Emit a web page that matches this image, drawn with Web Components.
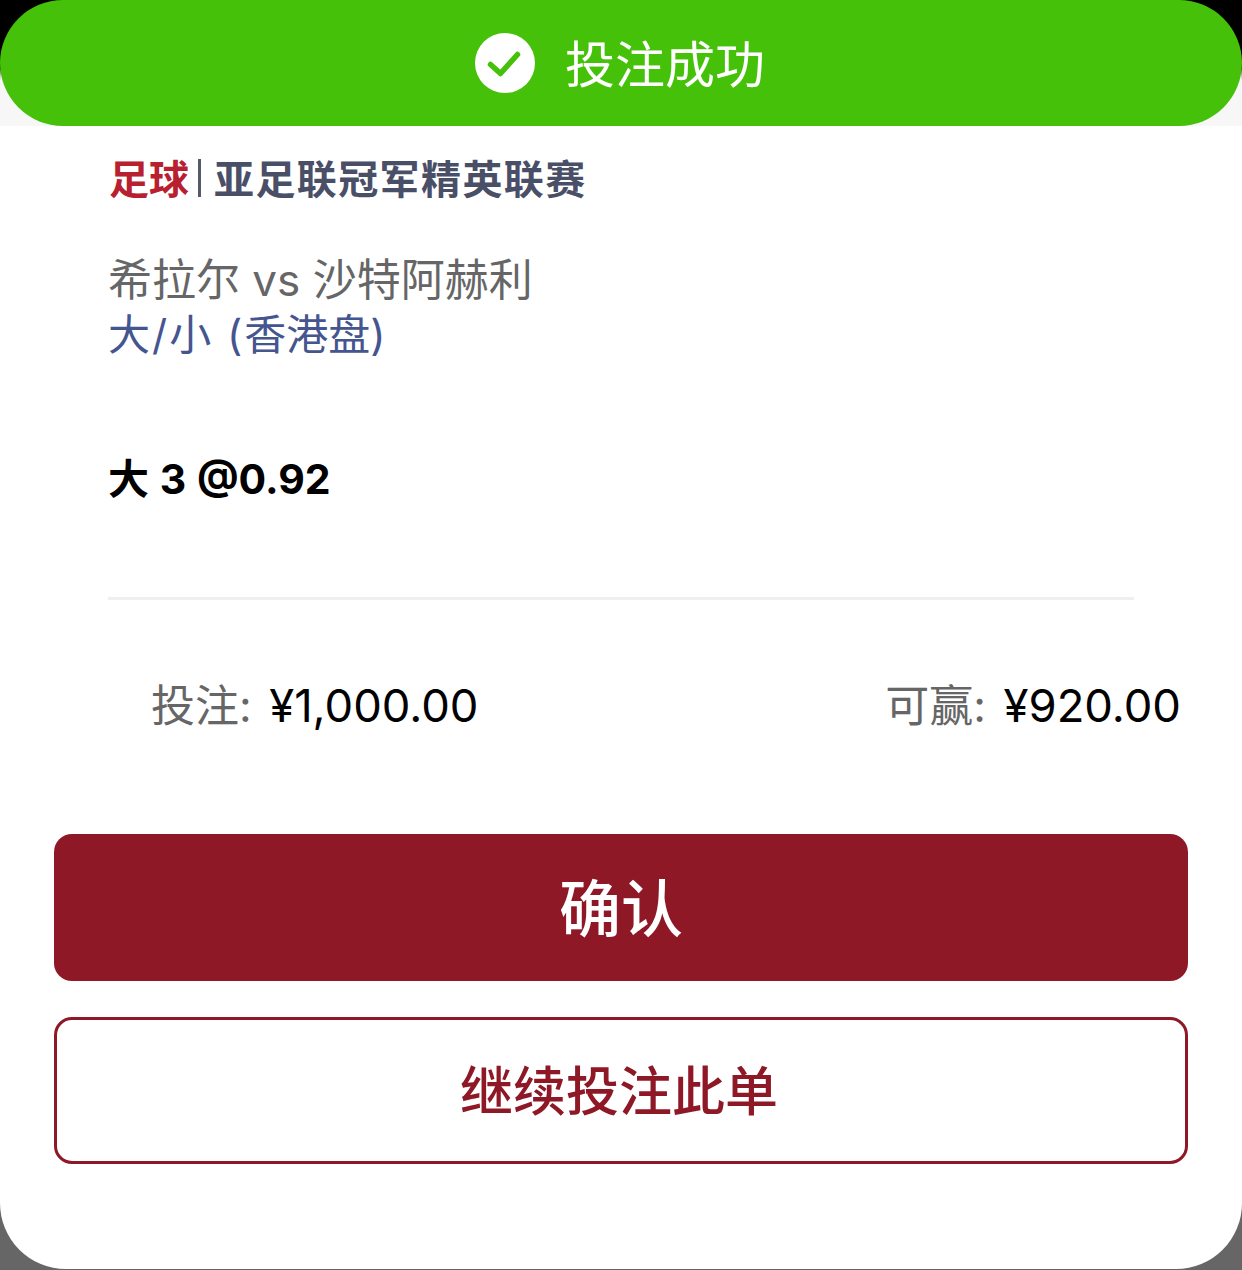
<!DOCTYPE html>
<html lang="zh">
<head>
<meta charset="utf-8">
<title>投注成功</title>
<style>
  html, body { margin: 0; height: 100%; }
  body {
    width: 1242px; height: 1270px; overflow: hidden;
    background: linear-gradient(#000 0, #000 80px, #666 1180px);
    font-family: Inter, "Noto Sans CJK SC", sans-serif;
  }
</style>
</head>
<body>
<bet-sheet>
  <success-banner>投注成功</success-banner>
  <bet-league sport="足球">亚足联冠军精英联赛</bet-league>
  <bet-match teams="希拉尔 vs 沙特阿赫利" market="大/小 (香港盘)"></bet-match>
  <bet-pick>大 3 @0.92</bet-pick>
  <bet-amounts stake="¥1,000.00" win="¥920.00"></bet-amounts>
  <action-button kind="solid">确认</action-button>
  <action-button kind="outline">继续投注此单</action-button>
</bet-sheet>

<script>
/* ── helper ── */
function shadow(el, html) {
  el.attachShadow({ mode: "open" }).innerHTML = html;
}
const STACK = `Inter, "Noto Sans CJK SC", sans-serif`;

/* ── <bet-sheet> ── */
class BetSheet extends HTMLElement {
  connectedCallback() {
    shadow(this, `
      <style>
        :host {
          display: block; width: 1242px; height: 1269px; box-sizing: border-box;
          border-radius: 80px 80px 66px 66px;
          background: linear-gradient(#f7f7f7 0, #f7f7f7 126px, #fff 126px);
          font-family: ${STACK};
        }
      </style>
      <slot></slot>`);
  }
}
customElements.define("bet-sheet", BetSheet);

/* ── <success-banner> ── */
class SuccessBanner extends HTMLElement {
  connectedCallback() {
    shadow(this, `
      <style>
        :host {
          display: flex; align-items: center; justify-content: center; gap: 30px;
          box-sizing: border-box; height: 126px; padding-right: 2px;
          background: #46c109; border-radius: 63px;
          color: #fff; font-size: 50px;
        }
        svg { width: 60px; height: 60px; display: block; }
        span { display: block; height: 126px; line-height: 130px; }
      </style>
      <svg viewBox="0 0 60 60">
        <circle cx="30" cy="30" r="30" fill="#fff"/>
        <path d="M15.500 31.500 L25.500 40.500 L42.500 21.500" fill="none" stroke="#46c109" stroke-width="5.500" stroke-linecap="round" stroke-linejoin="round"/>
      </svg>
      <span><slot></slot></span>`);
  }
}
customElements.define("success-banner", SuccessBanner);

/* ── <bet-league> ── */
class BetLeague extends HTMLElement {
  connectedCallback() {
    shadow(this, `
      <style>
        :host {
          display: flex; align-items: center;
          margin: 28px 0 0 109px; height: 46px;
          font-size: 40px; font-weight: 700; color: #4a4f68; letter-spacing: 1.400px;
        }
        .sport { color: #b8202f; letter-spacing: 0; }
        i { width: 3px; height: 38px; background: #55596b; margin: 1px 13px 0 9px; }
      </style>
      <span class="sport">${this.getAttribute("sport")}</span><i></i><slot></slot>`);
  }
}
customElements.define("bet-league", BetLeague);

/* ── <bet-match> ── */
class BetMatch extends HTMLElement {
  connectedCallback() {
    const [lead, rest] = this.getAttribute("market").split("(");
    shadow(this, `
      <style>
        :host { display: block; margin: 52px 0 0 108px; font-size: 44px; line-height: 56px; }
        .teams { color: #666; }
        .market { color: #45558f; font-size: 42px; margin-top: -1px; }
        .lead { letter-spacing: 2px; }
      </style>
      <div class="teams">${this.getAttribute("teams")}</div>
      <div class="market"><span class="lead">${lead}(</span>${rest}</div>`);
  }
}
customElements.define("bet-match", BetMatch);

/* ── <bet-pick> ── */
class BetPick extends HTMLElement {
  connectedCallback() {
    shadow(this, `
      <style>
        :host {
          display: block; margin: 88px 54px 0 108px; padding-bottom: 90px;
          width: 1026px; border-bottom: 3px solid #efefef;
          font-size: 41px; font-weight: 700; line-height: 56px; color: #000;
          word-spacing: 1px;
        }
      </style>
      <slot></slot>`);
  }
}
customElements.define("bet-pick", BetPick);

/* ── <bet-amounts> ── */
class BetAmounts extends HTMLElement {
  connectedCallback() {
    shadow(this, `
      <style>
        :host {
          display: flex; justify-content: space-between;
          margin: 78px 61px 0 151px; font-size: 44px; line-height: 56px;
        }
        b { font-weight: 400; color: #666; margin-right: 17.500px; }
        span { color: #000; font-size: 45.400px; }
      </style>
      <div><b>投注:</b><span>${this.getAttribute("stake")}</span></div>
      <div><b>可赢:</b><span>${this.getAttribute("win")}</span></div>`);
  }
}
customElements.define("bet-amounts", BetAmounts);

/* ── <action-button> ── */
class ActionButton extends HTMLElement {
  connectedCallback() {
    shadow(this, `
      <style>
        :host {
          display: flex; align-items: center; justify-content: center;
          box-sizing: border-box; width: 1134px; height: 147px; margin: 0 54px;
          border-radius: 18px; cursor: pointer;
        }
        :host([kind="solid"]) {
          margin-top: 100px; padding-bottom: 5px; background: #8e1826; color: #fff;
          font-size: 62px; font-weight: 500;
        }
        :host([kind="outline"]) {
          margin-top: 36px; padding: 0 4px 6px 0; background: #fff; color: #8e1826;
          border: 3px solid #8e1826; font-size: 53px; font-weight: 500;
        }
      </style>
      <slot></slot>`);
  }
}
customElements.define("action-button", ActionButton);
</script>
</body>
</html>
